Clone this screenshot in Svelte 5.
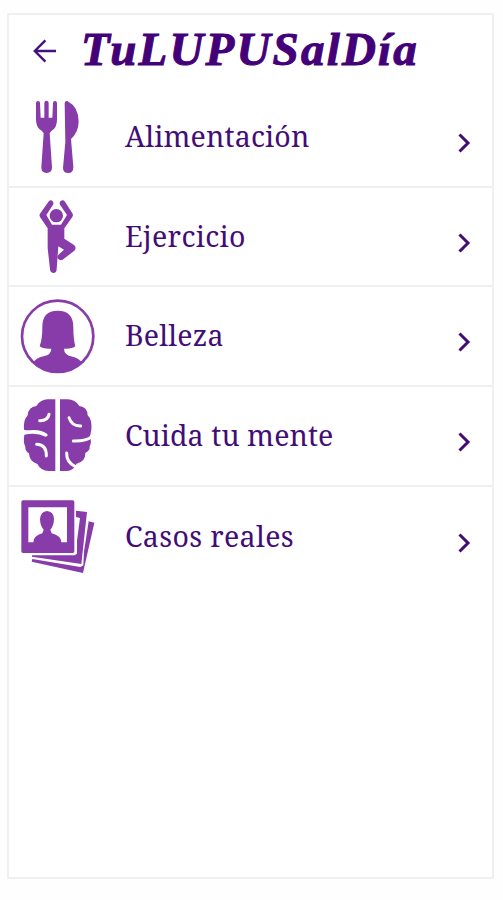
<script lang="ts">
    const items: { icon: string, label: string, spacing: number }[] = [
        { icon: "food", label: "Alimentación", spacing: 0.15 },
        { icon: "exercise", label: "Ejercicio", spacing: 0.35 },
        { icon: "beauty", label: "Belleza", spacing: 0.2 },
        { icon: "mind", label: "Cuida tu mente", spacing: 0.1 },
        { icon: "cases", label: "Casos reales", spacing: 0.35 },
    ];
</script>

<div class="screen">
    <header class="header">
        <button class="back" aria-label="Volver">
            <svg width="24" height="24" viewBox="0 0 24 24">
                <path d="M23 12H1.5M12.4 1.4L1.8 12L12.4 22.6" />
            </svg>
        </button>
        <h1>TuLUPUSalDía</h1>
    </header>

    <nav class="list">
        {#each items as { icon, label, spacing }}
            <button class="row">
                {#if icon === "food"}
                    <svg class="icon" viewBox="0 0 285 285">
                        <path d="M78 42Q78 36 84 36Q90 36 90 42L92 86H103V42Q103 35 109 35Q116 35 116 42V86H127L129 42Q129 36 135 36Q141 36 141 42V92Q141 116 124 126L119 133L126 235Q126 252 110 252Q94 252 94 235L101 133L96 126Q78 116 78 92Z" />
                        <path d="M164 43Q164 35 172 36Q206 54 206 98Q205 130 183 150L190 234Q190 252 175 252Q159 252 159 237L166 160Z" />
                    </svg>
                {:else if icon === "exercise"}
                    <svg class="icon" viewBox="0 -1 285 285">
                        <circle cx="139" cy="79" r="20" />
                        <path d="M117 35Q124 30 129 37Q132 41 129 46L109 77L126 106H153L171 77L150 46Q147 38 153 34Q160 31 165 37L188 73Q190 78 187 83L163 117V148L192 167Q201 175 193 184L158 211Q150 215 144 208Q141 200 147 195L162 181L145 171L140 239Q140 251 130 251Q120 250 120 239L113 177V117L90 83Q87 78 90 73Z" />
                    </svg>
                {:else if icon === "beauty"}
                    <svg class="icon" viewBox="0 -2 285 285">
                        <circle class="ring" cx="143" cy="140" r="107" />
                        <path d="M89 170Q97 149 97 112C97 79 112 63 143 63C175 63 190 80 190 112Q190 149 196 170Q188 178 162 177Q162 196 188 201Q207 205 216 219Q187 248 143 248Q99 248 70 217Q81 204 101 200Q124 195 124 177Q97 178 89 170Z" />
                    </svg>
                {:else if icon === "mind"}
                    <svg class="icon" viewBox="0 -3 285 285">
                        <path d="M136 31H113Q92 31 79 51Q55 54 53 79Q39 94 42 122Q51 125 69 123Q94 122 112 135Q115 142 107 143Q80 130 43 137Q39 160 46 173Q45 186 57 193Q58 218 82 225Q93 246 116 246H136Z" />
                        <path d="M150 31H173Q195 31 208 51Q232 54 233 79Q247 92 244 123L240 142Q246 160 239 173Q241 183 226 192Q227 217 200 224Q191 245 170 246H150Z" />
                        <path class="fold" d="M117 76Q113 96 89 95M80 166Q110 167 109 201M177 86Q185 112 212 111M246 142Q229 157 190 156M170 192Q169 219 195 232" />
                    </svg>
                {:else}
                    <svg class="icon" viewBox="0 -4 285 285">
                        <path fill-rule="evenodd" d="M39 30H188Q193 30 193 35V183Q193 188 188 188H39Q34 188 34 183V35Q34 30 39 30ZM55 51V156H70Q70 136 97 129L101 118Q91 108 90 87Q92 63 111 62Q131 63 132 87Q131 108 121 118L125 129Q154 136 154 156H171V51Z" />
                        <path d="M198 61L231 65L214 221L66 199V195L194 195L201 190V151L210 83L198 80Z" />
                        <path d="M236 93L253 97L219 248L65 214L67 206L211 230L220 225L222 184Z" />
                    </svg>
                {/if}
                <span class="label" style="letter-spacing: {spacing}px">{label}</span>
                <svg class="chevron" width="16" height="22" viewBox="0 0 16 22">
                    <path d="M3.5 2.5L12 11L3.5 19.5" />
                </svg>
            </button>
        {/each}
    </nav>
</div>

<style>
    :global(body) {
        background-color: #fefefe;
    }

    .screen {
        width: 487px;
        height: 866px;
        margin: 13px 0 0 7px;
        border: 2px solid #f0f0f0;
        box-sizing: border-box;
        background-color: #fff;
    }

    button {
        border: none;
        background-color: transparent;
        padding: 0;
        cursor: pointer;
    }

    .header {
        display: flex;
        height: 73px;
        box-sizing: border-box;
        padding-left: 24px;
    }

    .back {
        width: 24px;
        height: 71px;
    }

    .back svg {
        display: block;
        fill: none;
        stroke: #45127a;
        stroke-width: 2.4;
    }

    h1 {
        margin: 0 0 0 24px;
        color: #430078;
        font-family: "Liberation Serif", serif;
        font-size: 47px;
        font-style: italic;
        font-weight: bold;
        line-height: 68px;
        letter-spacing: 2.2px;
        -webkit-text-stroke: 1px #430078;
    }

    .list {
        display: flex;
        flex-direction: column;
    }

    .row {
        display: flex;
        align-items: center;
        height: 99.7px;
        box-sizing: border-box;
        border-bottom: 2px solid #efefef;
        padding: 0 20px 0 1px;
    }

    .row:last-child {
        border-bottom: none;
    }

    .icon {
        width: 95px;
        height: 95px;
        flex: none;
        fill: #873caa;
    }

    .ring {
        fill: none;
        stroke: #873caa;
        stroke-width: 8;
    }

    .fold {
        fill: none;
        stroke: #fff;
        stroke-width: 9;
        stroke-linecap: round;
    }

    .label {
        flex: 1;
        margin: 0 0 2px 20px;
        color: #430d78;
        font-family: "Noto Serif", "DejaVu Serif Condensed", "DejaVu Serif", serif;
        font-stretch: condensed;
        font-size: 28.5px;
        line-height: 40px;
        text-align: left;
        white-space: nowrap;
    }

    .chevron {
        margin-top: 12px;
        fill: none;
        stroke: #430d78;
        stroke-width: 3;
    }
</style>
